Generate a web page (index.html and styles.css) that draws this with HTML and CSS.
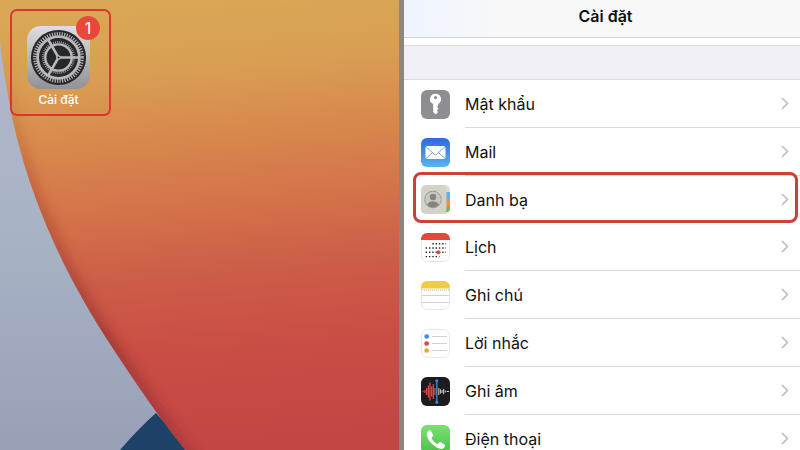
FILE: index.html
```
<!DOCTYPE html>
<html lang="vi">
<head>
    <meta charset="UTF-8">
    <meta name="viewport" content="width=device-width, initial-scale=1.0">
    <title>Cài đặt</title>
    <link rel="stylesheet" href="styles.css">
</head>
<body>
    <div class="screens">
        <section class="home">
            <svg class="wallpaper" viewBox="0 0 399 450" preserveAspectRatio="xMinYMin slice" aria-hidden="true">
                <defs>
                    <linearGradient id="sky" x1="0" y1="0" x2="0" y2="1">
                        <stop offset="0" stop-color="#b4b7cb"/>
                        <stop offset="0.5" stop-color="#a9b3c6"/>
                        <stop offset="1" stop-color="#98a0b6"/>
                    </linearGradient>
                    <linearGradient id="sun" gradientUnits="userSpaceOnUse" x1="150" y1="0" x2="190" y2="450">
                        <stop offset="0" stop-color="#d9a855"/>
                        <stop offset="0.16" stop-color="#d99e53"/>
                        <stop offset="0.3" stop-color="#d8894e"/>
                        <stop offset="0.46" stop-color="#d4734a"/>
                        <stop offset="0.62" stop-color="#cc5c47"/>
                        <stop offset="0.8" stop-color="#c94c45"/>
                        <stop offset="1" stop-color="#c44643"/>
                    </linearGradient>
                    <linearGradient id="edge" x1="0" y1="0" x2="0" y2="1">
                        <stop offset="0.1" stop-color="#c4602c" stop-opacity="0"/>
                        <stop offset="0.4" stop-color="#b2452c" stop-opacity="0.5"/>
                        <stop offset="0.75" stop-color="#8a2c2c" stop-opacity="0.65"/>
                        <stop offset="1" stop-color="#8a2c34" stop-opacity="0.4"/>
                    </linearGradient>
                    <filter id="soft" x="-20%" y="-20%" width="140%" height="140%">
                        <feGaussianBlur stdDeviation="6"/>
                    </filter>
                    <clipPath id="disc">
                        <path d="M-4 0 C0 50 6 90 15 130 C35 213 70 283 112 347 C135 382 158 416 185 450 H399 V0 Z"/>
                    </clipPath>
                </defs>
                <rect width="399" height="450" fill="url(#sky)"/>
                <path d="M120 450 Q138 429 156 413 L190 450 Z" fill="#1e4168"/>
                <g clip-path="url(#disc)">
                    <rect width="399" height="450" fill="url(#sun)"/>
                    <path d="M-4 0 C0 50 6 90 15 130 C35 213 70 283 112 347 C135 382 158 416 195 462" fill="none" stroke="url(#edge)" stroke-width="13" filter="url(#soft)"/>
                </g>
            </svg>

            <button class="app" type="button">
                <span class="app-icon">
                    <svg viewBox="0 0 64 64" aria-hidden="true">
                        <defs>
                            <linearGradient id="metal" x1="0" y1="0" x2="0" y2="1">
                                <stop offset="0" stop-color="#dedde0"/>
                                <stop offset="1" stop-color="#929197"/>
                            </linearGradient>
                        </defs>
                        <rect width="64" height="64" rx="14" fill="url(#metal)"/>
                        <circle cx="32" cy="32" r="28" fill="#25272a"/>
                        <circle cx="32" cy="32" r="24" fill="none" stroke="#b9b8ba" stroke-width="3.6" stroke-dasharray="1.2 1.313"/>
                        <circle cx="32" cy="32" r="21.2" fill="none" stroke="#b9b8ba" stroke-width="2.8"/>
                        <circle cx="32" cy="32" r="15.6" fill="none" stroke="#98979a" stroke-width="2.4" stroke-dasharray="1 1.042"/>
                        <circle cx="32" cy="32" r="13.4" fill="none" stroke="#b9b8ba" stroke-width="2.4"/>
                        <path d="M32 32H53M32 32L21.500 13.800M32 32L21.500 50.200" stroke="#b9b8ba" stroke-width="2.6"/>
                        <circle cx="32" cy="32" r="2.4" fill="#b9b8ba"/>
                        <circle cx="32" cy="32" r="1" fill="#25272a"/>
                    </svg>
                    <span class="badge">1</span>
                </span>
                <span class="app-name">Cài đặt</span>
            </button>
        </section>

        <div class="divider"></div>

        <section class="settings">
            <header class="title-bar">
                <h1>Cài đặt</h1>
            </header>
            <div class="group-gap"></div>
            <nav class="list">
                <a class="row" href="#passwords">
                    <svg class="row-icon" viewBox="0 0 29 29" aria-hidden="true">
                        <rect width="29" height="29" rx="6" fill="#8e8d92"/>
                        <path fill="#fff" fill-rule="evenodd" d="M14.5 3.8a5.4 5.4 0 0 0-2.3 10.3V22l2.4 2.6 2.5-2.5-1.4-1.6 1.8-1.8-1.5-1.7 1.1-1.2v-1.8A5.4 5.4 0 0 0 14.5 3.8Zm0 2.2a1.6 1.6 0 1 1 0 3.2 1.6 1.6 0 0 1 0-3.2Z"/>
                    </svg>
                    <span class="row-label">Mật khẩu</span>
                    <svg class="chevron" viewBox="0 0 8 13" aria-hidden="true"><path d="M1 1l5.500 5.500L1 12"/></svg>
                </a>
                <a class="row" href="#mail">
                    <svg class="row-icon" viewBox="0 0 29 29" aria-hidden="true">
                        <defs>
                            <linearGradient id="mail" x1="0" y1="0" x2="0" y2="1">
                                <stop offset="0" stop-color="#3068e0"/>
                                <stop offset="1" stop-color="#55b5f2"/>
                            </linearGradient>
                        </defs>
                        <rect width="29" height="29" rx="6" fill="url(#mail)"/>
                        <rect x="4.500" y="8" width="20" height="13" rx="1.800" fill="#fff"/>
                        <path d="M5 8.800l8.200 7.400q1.300 1.100 2.600 0L24 8.800M5 20.500l6.600-6M24 20.500l-6.600-6" fill="none" stroke="#5a9be6" stroke-width="0.900"/>
                    </svg>
                    <span class="row-label">Mail</span>
                    <svg class="chevron" viewBox="0 0 8 13" aria-hidden="true"><path d="M1 1l5.500 5.500L1 12"/></svg>
                </a>
                <a class="row row-marked" href="#contacts">
                    <svg class="row-icon" viewBox="0 0 29 29" aria-hidden="true">
                        <rect x="14" width="15" height="29" rx="5" fill="#deddd6"/>
                        <path d="M24 7h5v8h-5z" fill="#5fb2ea"/>
                        <path d="M24 14.500h5V22h-5z" fill="#ec9138"/>
                        <path d="M24 22h5v1.500q0 2.500-2.500 3.500H24z" fill="#62c04f"/>
                        <rect width="25.500" height="29" rx="5" fill="#d3d2c9"/>
                        <circle cx="12" cy="14.500" r="8.300" fill="#c9c8c0" stroke="#93928c" stroke-width="0.900"/>
                        <circle cx="12" cy="12" r="3.200" fill="#85847f"/>
                        <path d="M6.200 19.700c1.200-2.800 3.400-3.500 5.800-3.500s4.600.7 5.800 3.500a7.700 7.700 0 0 1-11.600 0Z" fill="#85847f"/>
                    </svg>
                    <span class="row-label">Danh bạ</span>
                    <svg class="chevron" viewBox="0 0 8 13" aria-hidden="true"><path d="M1 1l5.500 5.500L1 12"/></svg>
                </a>
                <a class="row" href="#calendar">
                    <svg class="row-icon" viewBox="0 0 29 29" aria-hidden="true">
                        <rect x="0.500" y="0.500" width="28" height="28" rx="6" fill="#fff" stroke="#e6e6e8"/>
                        <path d="M0 7V6a6 6 0 0 1 6-6h17a6 6 0 0 1 6 6v1z" fill="#e04a3e"/>
                        <g stroke="#222" stroke-width="1.400" stroke-dasharray="1.400 1.900">
                            <path d="M11.300 10.800H25"/>
                            <path d="M4.700 15H25"/>
                            <path d="M4.700 19.300H25"/>
                            <path d="M4.700 23.600H18.500"/>
                        </g>
                        <circle cx="17.400" cy="19.300" r="2" fill="#dc4a40"/>
                    </svg>
                    <span class="row-label">Lịch</span>
                    <svg class="chevron" viewBox="0 0 8 13" aria-hidden="true"><path d="M1 1l5.500 5.500L1 12"/></svg>
                </a>
                <a class="row" href="#notes">
                    <svg class="row-icon" viewBox="0 0 29 29" aria-hidden="true">
                        <rect x="0.500" y="0.500" width="28" height="28" rx="6" fill="#fff" stroke="#e6e6e8"/>
                        <path d="M0 7.500V6a6 6 0 0 1 6-6h17a6 6 0 0 1 6 6v1.500z" fill="#f0cb45"/>
                        <path d="M1 9H28" stroke="#aaa" stroke-width="1" stroke-dasharray="1 1"/>
                        <path d="M0.500 14.500h28M0.500 21.500h28" stroke="#d2d2d4" stroke-width="1"/>
                    </svg>
                    <span class="row-label">Ghi chú</span>
                    <svg class="chevron" viewBox="0 0 8 13" aria-hidden="true"><path d="M1 1l5.500 5.500L1 12"/></svg>
                </a>
                <a class="row" href="#reminders">
                    <svg class="row-icon" viewBox="0 0 29 29" aria-hidden="true">
                        <rect x="0.500" y="0.500" width="28" height="28" rx="6" fill="#fff" stroke="#e8e8ea"/>
                        <path d="M11 7.500h15M11 14.500h15M11 21.500h15" stroke="#d0d0d2" stroke-width="1"/>
                        <g stroke-width="1.4" stroke-opacity="0.35">
                            <circle cx="5.700" cy="7.500" r="2.1" fill="#3f86dc" stroke="#3f86dc"/>
                            <circle cx="5.700" cy="14.500" r="2.1" fill="#cf4b42" stroke="#cf4b42"/>
                            <circle cx="5.700" cy="21.500" r="2.1" fill="#e8a13d" stroke="#e8a13d"/>
                        </g>
                    </svg>
                    <span class="row-label">Lời nhắc</span>
                    <svg class="chevron" viewBox="0 0 8 13" aria-hidden="true"><path d="M1 1l5.500 5.500L1 12"/></svg>
                </a>
                <a class="row" href="#voice-memos">
                    <svg class="row-icon" viewBox="0 0 29 29" aria-hidden="true">
                        <rect width="29" height="29" rx="6" fill="#1c1c1e"/>
                        <path d="M1.500 14.500h1M4 13v3M5.700 11v7M7.400 8.500v12M9 5.500v18M10.700 9.500v10M12.400 7v15M14 11v7" stroke="#d8483f" stroke-width="1.300"/>
                        <path d="M17.800 11v7M19.400 12.300v4.400M21 13v3M22.600 11.800v5.400M24.200 13.500v2M25.500 14.500H28" stroke="#e4e4e6" stroke-width="0.900"/>
                        <path d="M15.800 3.500v22" stroke="#3f86cc" stroke-width="1.400"/>
                        <circle cx="15.800" cy="3.800" r="1.500" fill="#3f86cc"/>
                        <circle cx="15.800" cy="25.200" r="1.500" fill="#3f86cc"/>
                    </svg>
                    <span class="row-label">Ghi âm</span>
                    <svg class="chevron" viewBox="0 0 8 13" aria-hidden="true"><path d="M1 1l5.500 5.500L1 12"/></svg>
                </a>
                <a class="row" href="#phone">
                    <svg class="row-icon" viewBox="0 0 29 29" aria-hidden="true">
                        <defs>
                            <linearGradient id="phone" x1="0" y1="0" x2="0" y2="1">
                                <stop offset="0" stop-color="#7be06f"/>
                                <stop offset="1" stop-color="#48c24b"/>
                            </linearGradient>
                        </defs>
                        <rect width="29" height="29" rx="6" fill="url(#phone)"/>
                        <path fill="#fff" d="M8.300 5.300c-2 1-3 2.600-2.500 4.900.7 3 2.500 6 5 8.500 2.600 2.600 5.600 4.500 8.500 5.100 2.200.4 3.900-.7 4.700-2.600.3-.7.100-1.200-.5-1.600l-3.600-2.400c-.7-.4-1.200-.3-1.700.2l-1.300 1.300c-.4.400-.8.400-1.300.1a16 16 0 0 1-4.900-5c-.3-.5-.2-.9.100-1.300l1.200-1.200c.5-.5.600-1 .2-1.600L9.800 5.700c-.4-.6-.9-.7-1.500-.4Z"/>
                    </svg>
                    <span class="row-label">Điện thoại</span>
                    <svg class="chevron" viewBox="0 0 8 13" aria-hidden="true"><path d="M1 1l5.500 5.500L1 12"/></svg>
                </a>
            </nav>
        </section>
    </div>
</body>
</html>
```

FILE: styles.css
```
* {
    box-sizing: border-box;
}
body {
    margin: 0;
    font-family: Inter, "Liberation Sans", sans-serif;
    color: #111;
    background-color: white;
}
.screens {
    display: grid;
    grid-template-columns: 399fr 5px 396fr;
    height: 100vh;
    overflow: hidden;
}
.divider {
    background-color: #8b8680;
}

/* home screen */
.home {
    position: relative;
    overflow: hidden;
    padding: 9px 10px;
}
.wallpaper {
    position: absolute;
    inset: 0;
    width: 100%;
    height: 100%;
}
.app {
    position: relative;
    display: flex;
    flex-direction: column;
    align-items: center;
    gap: 3px;
    padding: 15px 19px 6px 15px;
    border: 2px solid #d8392f;
    border-radius: 7px;
    background: none;
    color: white;
    font-family: inherit;
    cursor: pointer;
}
.app-icon {
    position: relative;
    display: block;
    width: 63px;
    height: 63px;
}
.app-icon svg {
    display: block;
}
.badge {
    position: absolute;
    top: -10px;
    right: -10px;
    width: 24px;
    height: 24px;
    border-radius: 50%;
    background-color: #e8483a;
    font-size: 16px;
    line-height: 24px;
    text-align: center;
}
.app-name {
    font-size: 12px;
    font-weight: 500;
    line-height: 16px;
}

/* settings list */
.settings {
    display: flex;
    flex-direction: column;
    overflow: hidden;
}
.title-bar {
    flex: none;
    height: 38px;
    padding: 6px 0 0 7px;
    border-bottom: 1px solid #d4d4d6;
    background: linear-gradient(100deg, #eef4fe, #f8f8f9 25%);
}
.title-bar h1 {
    margin: 0;
    font-size: 16px;
    font-weight: 600;
    line-height: 20px;
    text-align: center;
}
.group-gap {
    flex: none;
    height: 35px;
    margin-top: 7px;
    border-top: 1px solid #dcdce0;
    border-bottom: 1px solid #dcdce0;
    background-color: #f0eff5;
}
.row {
    position: relative;
    display: flex;
    align-items: center;
    padding-left: 17px;
    color: inherit;
    text-decoration: none;
}
.row-icon {
    flex: none;
    width: 29px;
    height: 29px;
    margin-right: 15px;
}
.row-label {
    flex: 1;
    padding-top: 2px;
    font-size: 16px;
    line-height: 45px;
    border-bottom: 1px solid #dadadc;
}
.chevron {
    align-self: stretch;
    box-sizing: content-box;
    width: 8px;
    padding-right: 11px;
    border-bottom: 1px solid #dadadc;
    fill: none;
    stroke: #bdbdc0;
    stroke-width: 1.6;
}
.row-marked .row-label,
.row-marked .chevron {
    border-bottom: none;
}
.row-marked::after {
    content: "";
    position: absolute;
    inset: -4px 2px 0 9px;
    border: 3px solid #cf3f38;
    border-radius: 8px;
}
```
